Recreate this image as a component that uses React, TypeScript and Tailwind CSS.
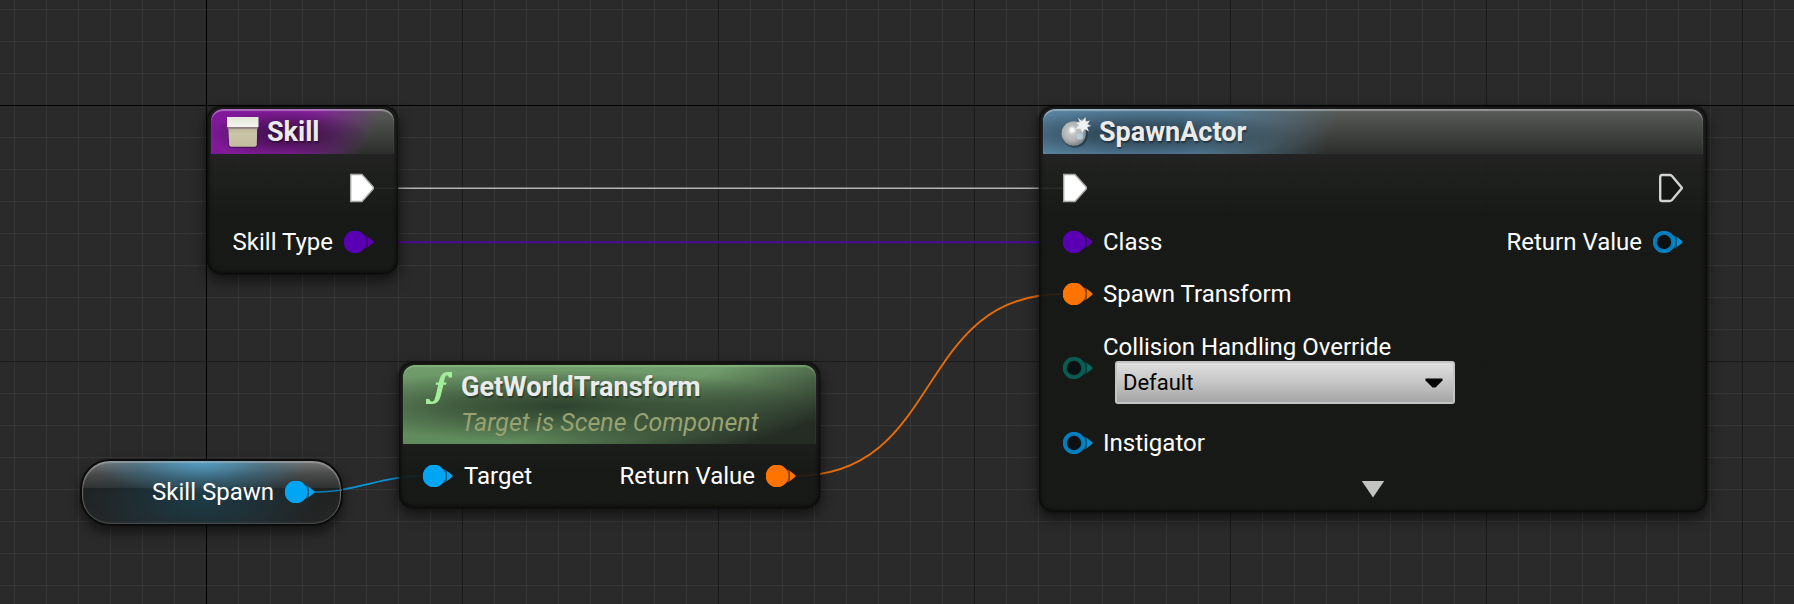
import type { ReactNode } from "react";

type PinProps = { color: string; hollow?: boolean };

function DataPin({ color, hollow = false }: PinProps) {
  return (
    <svg width="30" height="22" viewBox="0 0 30 22" className="shrink-0" aria-hidden="true">
      <path d="M19 4.5 L23 5 L23 17 L19 17.5 Z" fill={color} opacity="0.55" />
      <path d="M23.5 5.4 L29.4 10.2 V11.8 L23.5 16.6 Z" fill={color} />
      {hollow ? (
        <circle cx="11" cy="11" r="9.2" fill="#0b1012" stroke={color} strokeWidth="4" strokeOpacity="0.85" />
      ) : (
        <circle cx="11" cy="11" r="11.4" fill={color} />
      )}
    </svg>
  );
}

function ExecPin({ hollow = false }: { hollow?: boolean }) {
  return (
    <svg width="24" height="30" viewBox="0 0 24 30" className="shrink-0" aria-hidden="true">
      {hollow ? (
        <path
          d="M1.2 4 Q1.2 2 3 2 H10.5 Q12 2 13 3 L23 15 L13 27 Q12 28 10.5 28 H3 Q1.2 28 1.2 26 Z"
          fill="#151715"
          stroke="#d2d2d2"
          strokeWidth="2.4"
        />
      ) : (
        <path
          d="M0.7 1.5 H12 L23.3 14 V16 L12 28.5 H0.7 Z"
          fill="#ffffff"
          stroke="#a8a8a8"
          strokeWidth="1.4"
        />
      )}
    </svg>
  );
}

function EventIcon() {
  return (
    <svg width="32" height="32" viewBox="0 0 32 32" className="shrink-0" aria-hidden="true">
      <defs>
        <linearGradient id="lid" x1="0" y1="0" x2="0" y2="1">
          <stop offset="0" stopColor="#e4e6da" />
          <stop offset="1" stopColor="#f4f5ef" />
        </linearGradient>
        <linearGradient id="box" x1="0" y1="0" x2="0" y2="1">
          <stop offset="0" stopColor="#b9b295" />
          <stop offset="0.3" stopColor="#cbc5a8" />
          <stop offset="1" stopColor="#c3bc9d" />
        </linearGradient>
      </defs>
      <path d="M1 11 H31 L30.5 30 Q30 32 28 32 H4 Q2 32 1.5 30 Z" fill="#2a0835" opacity="0.45" />
      <path d="M1.3 12 H30.2 L29.8 29 Q29.4 30.7 28 30.7 H4 Q2.6 30.7 2.2 29 Z" fill="url(#box)" />
      <rect x="0.5" y="10.5" width="30.5" height="2.2" fill="#8b7a80" />
      <rect x="0" y="1" width="31.5" height="10" fill="url(#lid)" />
    </svg>
  );
}

function SpawnIcon() {
  return (
    <svg width="32" height="32" viewBox="0 0 32 32" className="shrink-0" aria-hidden="true">
      <defs>
        <radialGradient id="ball" cx="0.42" cy="0.42" r="0.62">
          <stop offset="0" stopColor="#cfd1d2" />
          <stop offset="0.6" stopColor="#b0b2b4" />
          <stop offset="1" stopColor="#7b7f82" />
        </radialGradient>
        <radialGradient id="glint">
          <stop offset="0" stopColor="#ffffff" />
          <stop offset="0.4" stopColor="#ffffff" stopOpacity="0.85" />
          <stop offset="1" stopColor="#ffffff" stopOpacity="0" />
        </radialGradient>
      </defs>
      <circle cx="14" cy="19" r="12.8" fill="#14222c" opacity="0.5" />
      <circle cx="12.8" cy="17.5" r="12.2" fill="url(#ball)" />
      <circle cx="11.2" cy="14" r="4.2" fill="url(#glint)" />
      <circle cx="19" cy="20.5" r="3.2" fill="#b5d6e6" opacity="0.75" />
      <circle cx="22" cy="9" r="6.5" fill="url(#glint)" />
      <path
        d="M16.8 1.6 L21 5.6 L24.6 1 L24.6 5.8 L29 4.4 L26.2 8.2 L30.4 10 L26 11 L28 15.4 L23.4 12.8 L21 17.4 L20.2 12.4 L14.5 13 L18.4 9 L14.6 6.6 L19 6.4 Z"
        fill="#eef2f4"
      />
    </svg>
  );
}

function FunctionIcon() {
  return (
    <svg width="28" height="34" viewBox="0 0 28 34" className="shrink-0" aria-hidden="true">
      <path
        d="M27 1 V6.4 H23.8 C23.6 4 21.4 3.4 20.4 5.4 C19.6 7.2 19.4 9 18.8 11.6 H21.6 L21 13.8 H18.4 L15.8 24.6 C14.4 30.4 11.6 33 6.6 33 H1 V28 H4.4 C4.8 31 8.4 31.4 9.6 28.4 C10.4 26.4 10.8 24.4 11.4 21.8 L13.2 13.8 H10.6 L11 11.6 H13.8 C14.8 5.2 17.6 1 22.6 1 Z"
        fill="#a4ee9b"
      />
    </svg>
  );
}

function Node({ place, header, children }: { place: string; header: ReactNode; children: ReactNode }) {
  return (
    <article
      className={`absolute rounded-[14px] bg-[linear-gradient(180deg,rgba(33,34,33,0.88)_48px,rgba(28,30,27,0.9)_75px,rgba(22,24,21,0.92)_110px)] px-1 pt-[3px] text-2xl leading-7 text-white shadow-[inset_0_0_4px_1px_rgba(0,0,0,0.85),0_0_2px_rgba(0,0,0,0.8),0_6px_14px_1px_rgba(0,0,0,0.55)] ${place}`}
    >
      {header}
      {children}
    </article>
  );
}

const titleClass = "text-[27px] leading-8 font-bold text-[#ebebeb] [text-shadow:1px_2px_1px_rgba(0,0,0,0.35)]";
const headerShine = "rounded-t-[12px] shadow-[inset_0_2px_1px_rgba(255,255,255,0.35)]";

function SkillNode() {
  return (
    <Node
      place="left-[207px] top-[106px] h-[168px] w-[191px]"
      header={
        <header
          className={`flex h-[45px] items-center gap-2 bg-[radial-gradient(ellipse_80px_24px_at_42%_56%,rgba(30,8,36,0.7),rgba(30,8,36,0.45)_45%,transparent),linear-gradient(118deg,#7f1799_0%,#832099_50%,rgba(128,34,148,0.65)_64%,transparent_84%),linear-gradient(180deg,#5a5c5a,#2c2e2c)] px-4 ${headerShine}`}
        >
          <EventIcon />
          <h2 className={titleClass}>Skill</h2>
        </header>
      }
    >
      <div className="flex flex-col items-end pt-[7px]">
        <div className="flex h-[54px] items-center pr-5">
          <ExecPin />
        </div>
        <div className="flex h-[54px] items-center gap-[11px] pr-5">
          <span>Skill Type</span>
          <DataPin color="#5a00b4" />
        </div>
      </div>
    </Node>
  );
}

function TransformNode() {
  return (
    <Node
      place="left-[399px] top-[362px] h-[146px] w-[421px]"
      header={
        <header
          className="flex h-[79px] gap-2 rounded-t-[12px] bg-[radial-gradient(ellipse_250px_36px_at_38%_52%,rgba(32,46,32,0.8),rgba(32,46,32,0.55)_40%,transparent),linear-gradient(160deg,transparent_52%,rgba(30,34,30,0.9)_90%),linear-gradient(180deg,#719c6c,#5f8a5b)] pl-[22px] shadow-[inset_0_2px_1px_rgba(150,215,140,0.4)]"
        >
          <div className="pt-1.5">
            <FunctionIcon />
          </div>
          <div className="pt-1.5">
            <h2 className={titleClass}>GetWorldTransform</h2>
            <p className="pt-1.5 text-[25px] text-[#98a271] italic">Target is Scene Component</p>
          </div>
        </header>
      }
    >
      <div className="flex h-16 items-center justify-between px-5">
        <div className="flex items-center gap-[11px]">
          <DataPin color="#00a6f4" />
          <span>Target</span>
        </div>
        <div className="flex items-center gap-[11px]">
          <span>Return Value</span>
          <DataPin color="#ff7300" />
        </div>
      </div>
    </Node>
  );
}

function SpawnActorNode() {
  return (
    <Node
      place="left-[1039px] top-[106px] h-[406px] w-[668px]"
      header={
        <header
          className={`flex h-[45px] items-center gap-[6px] bg-[radial-gradient(ellipse_150px_24px_at_100px_55%,rgba(24,38,48,0.8),rgba(24,38,48,0.45)_45%,transparent),linear-gradient(110deg,#56809c_0px,#527a94_160px,rgba(82,122,148,0.6)_210px,transparent_280px),linear-gradient(180deg,#5a5c5a,#2c2e2c)] px-[18px] ${headerShine}`}
        >
          <SpawnIcon />
          <h2 className={titleClass}>SpawnActor</h2>
        </header>
      }
    >
      <div className="flex justify-between px-5 pt-[7px]">
        <div className="flex flex-col">
          <div className="flex h-[54px] items-center">
            <ExecPin />
          </div>
          <div className="flex h-[54px] items-center gap-[10px]">
            <DataPin color="#5a00b4" />
            <span>Class</span>
          </div>
          <div className="flex h-[50px] items-center gap-[10px]">
            <DataPin color="#ff7300" />
            <span>Spawn Transform</span>
          </div>
          <div className="flex h-[98px] items-center gap-[10px]">
            <DataPin color="#06685c" hollow />
            <div className="flex flex-col">
              <label htmlFor="collision">Collision Handling Override</label>
              <div className="relative ml-3 w-[340px]">
                <select
                  id="collision"
                  defaultValue="Default"
                  className="h-[43px] w-full appearance-none rounded-[3px] border-2 border-[#c4c4c4] bg-[linear-gradient(180deg,#dedede,#c8c8c8_45%,#a6a6a6)] pt-px pl-1.5 text-[22px] leading-7 text-black"
                >
                  <option>Default</option>
                </select>
                <svg
                  width="18"
                  height="10"
                  viewBox="0 0 18 10"
                  className="pointer-events-none absolute top-[17px] right-3"
                  aria-hidden="true"
                >
                  <path d="M0.5 0.5 H17.5 V2.5 L10.5 9.5 H7.5 L0.5 2.5 Z" fill="#050505" />
                </svg>
              </div>
            </div>
          </div>
          <div className="flex h-[52px] items-center gap-[10px]">
            <DataPin color="#0091dd" hollow />
            <span>Instigator</span>
          </div>
        </div>
        <div className="flex flex-col items-end">
          <div className="flex h-[54px] items-center">
            <ExecPin hollow />
          </div>
          <div className="flex h-[54px] items-center gap-[11px]">
            <span>Return Value</span>
            <DataPin color="#0091dd" hollow />
          </div>
        </div>
      </div>
      <button type="button" aria-label="Show advanced pins" className="mx-auto flex h-10 items-center">
        <svg width="24" height="18" viewBox="0 0 24 18" aria-hidden="true">
          <path d="M0.8 1 H23.2 L12 17.6 Z" fill="#c3c3c3" />
        </svg>
      </button>
    </Node>
  );
}

function SkillSpawnNode() {
  return (
    <article className="absolute top-[459px] left-[80px] flex h-[67px] w-[263px] items-center justify-end gap-[11px] rounded-[30px] border-2 border-[#0b0b0b] bg-[radial-gradient(ellipse_110px_34px_at_46%_0%,rgba(80,170,215,0.85),rgba(60,130,165,0.4)_60%,transparent),radial-gradient(ellipse_120px_50px_at_46%_60%,rgba(25,75,95,0.6),transparent),linear-gradient(180deg,#777_0%,#4a4b4b_20%,#303232_42%,#202121_43%,#242525_100%)] pr-[26px] pb-px text-2xl leading-7 text-white shadow-[inset_0_1px_1px_1px_rgba(190,190,190,0.45),inset_0_-1px_2px_rgba(110,110,110,0.5),0_6px_12px_rgba(0,0,0,0.55)]">
      <span>Skill Spawn</span>
      <DataPin color="#00a6f4" />
    </article>
  );
}

function Grid() {
  return (
    <svg className="absolute inset-0 h-full w-full" aria-hidden="true">
      <defs>
        <pattern id="minor" x="206" y="105" width="32" height="32" patternUnits="userSpaceOnUse">
          <path d="M0 0 H32 V1 H1 V32 H0 Z" fill="#363636" />
        </pattern>
        <pattern id="major" x="206" y="105" width="256" height="256" patternUnits="userSpaceOnUse">
          <path d="M0 0 H256 V1 H1 V256 H0 Z" fill="#1a1a1a" />
        </pattern>
      </defs>
      <rect width="100%" height="100%" fill="url(#minor)" />
      <rect width="100%" height="100%" fill="url(#major)" />
      <rect x="206" y="0" width="1" height="100%" fill="#000000" />
      <rect x="0" y="105" width="100%" height="1" fill="#000000" />
    </svg>
  );
}

function Wires() {
  return (
    <svg className="absolute inset-0 h-full w-full" fill="none" aria-hidden="true">
      <path d="M374 188.2 H1063" stroke="#b4b4b4" strokeWidth="1.6" />
      <path d="M373 242.2 H1063" stroke="#4d0a96" strokeWidth="2" />
      <path d="M795 476 C945 476 913 294 1063 294" stroke="#e86c08" strokeWidth="1.8" />
      <path d="M314 492 C356 492 382 476 423 476" stroke="#0a94d8" strokeWidth="1.8" />
    </svg>
  );
}

function VariableWireStub() {
  return (
    <svg className="pointer-events-none absolute top-[482px] left-[314px]" width="28" height="12" fill="none" aria-hidden="true">
      <path d="M0 10 C10 10 18 9 28 8" stroke="#0a7fb8" strokeWidth="1.6" />
    </svg>
  );
}

export default function App() {
  return (
    <main className="relative h-screen overflow-hidden bg-[#2a2a2a] font-['Roboto',sans-serif]">
      <Grid />
      <Wires />
      <SkillNode />
      <SkillSpawnNode />
      <VariableWireStub />
      <TransformNode />
      <SpawnActorNode />
    </main>
  );
}
